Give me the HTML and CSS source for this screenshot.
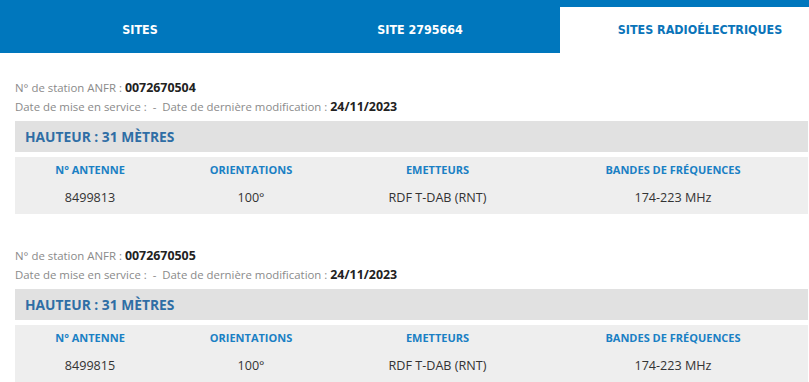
FILE: index.html
```html
<!DOCTYPE html>
<html lang="fr">
<head>
<meta charset="utf-8">
<title>Sites radioélectriques</title>
<link rel="stylesheet" href="styles.css">
</head>
<body>
<nav class="tabs">
  <a class="tab">SITES</a>
  <a class="tab">SITE 2795664</a>
  <a class="tab active">SITES RADIOÉLECTRIQUES</a>
</nav>
<main class="content">
  <section class="block">
    <div class="info">
      <p class="line"><span class="label">N° de station ANFR : </span><b class="value">0072670504</b></p>
      <p class="line"><span class="label">Date de mise en service : &nbsp;-&nbsp; Date de dernière modification : </span><b class="value">24/11/2023</b></p>
    </div>
    <h2 class="height">HAUTEUR : 31 MÈTRES</h2>
    <div class="table">
      <div class="th">N° ANTENNE</div>
      <div class="th">ORIENTATIONS</div>
      <div class="th">EMETTEURS</div>
      <div class="th">BANDES DE FRÉQUENCES</div>
      <div class="td">8499813</div>
      <div class="td">100°</div>
      <div class="td">RDF T-DAB (RNT)</div>
      <div class="td">174-223 MHz</div>
    </div>
  </section>
  <section class="block">
    <div class="info">
      <p class="line"><span class="label">N° de station ANFR : </span><b class="value">0072670505</b></p>
      <p class="line"><span class="label">Date de mise en service : &nbsp;-&nbsp; Date de dernière modification : </span><b class="value">24/11/2023</b></p>
    </div>
    <h2 class="height">HAUTEUR : 31 MÈTRES</h2>
    <div class="table">
      <div class="th">N° ANTENNE</div>
      <div class="th">ORIENTATIONS</div>
      <div class="th">EMETTEURS</div>
      <div class="th">BANDES DE FRÉQUENCES</div>
      <div class="td">8499815</div>
      <div class="td">100°</div>
      <div class="td">RDF T-DAB (RNT)</div>
      <div class="td">174-223 MHz</div>
    </div>
  </section>
</main>
</body>
</html>
```

FILE: styles.css
```css
html, body {
  margin: 0;
  padding: 0;
  background: #ffffff;
  overflow: hidden;
}
body {
  font-family: "Open Sans", "DejaVu Sans", sans-serif;
  color: #333;
}
.tabs {
  display: flex;
  background: #0077bd;
  height: 53px;
  padding-top: 7px;
  box-sizing: border-box;
  overflow: hidden;
}
.tab {
  flex: 0 0 280px;
  height: 46px;
  line-height: 46px;
  text-align: center;
  color: #ffffff;
  font-family: "DejaVu Sans Condensed", "Liberation Sans Narrow", "Liberation Sans", sans-serif;
  font-stretch: condensed;
  font-weight: bold;
  font-size: 12.4px;
}
.tab.active {
  background: #ffffff;
  color: #0a74b9;
}
.content {
  display: flex;
  flex-direction: column;
  gap: 31px;
  padding: 24px 1px 0 15px;
}
.info {
  margin-bottom: 6px;
}
.line {
  margin: 0;
  height: 19px;
  line-height: 19px;
  white-space: nowrap;
}
.label {
  font-size: 11.4px;
  line-height: 19px;
  color: #8a8a8a;
}
.value {
  font-size: 12.4px;
  line-height: 19px;
  font-weight: bold;
  color: #222;
}
.height {
  margin: 0 0 5px;
  height: 31px;
  line-height: 31px;
  background: #e1e1e1;
  padding-left: 10px;
  font-size: 13.8px;
  font-weight: bold;
  color: #2f6ea5;
}
.table {
  display: grid;
  grid-template-columns: 150px 172px 201px 1fr;
  grid-template-rows: 16px 20px;
  row-gap: 10px;
  padding: 5px 0 6px;
  background: #eeeeee;
  text-align: center;
}
.th {
  font-size: 11px;
  font-weight: bold;
  line-height: 16px;
  color: #1a80c4;
}
.td {
  font-size: 12.6px;
  line-height: 20px;
  color: #333;
}
```
